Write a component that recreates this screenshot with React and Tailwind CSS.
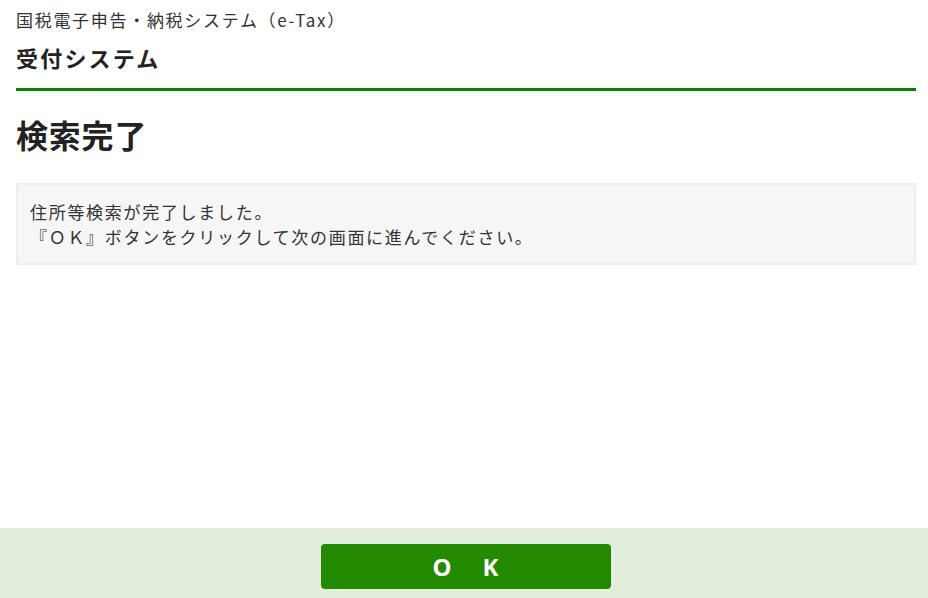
import React from 'react';

const App = () => {
    return (
        <div
            className="flex min-h-screen flex-col bg-white text-[#222]"
            style={{ fontFamily: '"Noto Sans CJK JP", "Noto Sans", sans-serif' }}
        >
            <div className="pl-4 pr-3">
                <header className="border-b-[3px] border-[#0a8200] pb-[16px]">
                    <p className="pt-[8px] text-[17px] leading-[24px] tracking-[1.7px] text-[#333]">国税電子申告・納税システム（e-Tax）</p>
                    <h1 className="mt-[10px] text-[22px] font-bold leading-[30px] tracking-[2.2px]">受付システム</h1>
                </header>

                <h2 className="mt-[20px] text-[32px] font-bold leading-[46px] tracking-[0.8px]">検索完了</h2>

                <div className="mt-[26px] border-2 border-[#eeeeee] bg-[#f6f6f6] px-3 pb-[14px] pt-[14px] text-[17px] leading-[25px] tracking-[1.7px] text-[#333]">
                    <p>住所等検索が完了しました。</p>
                    <p>『ＯＫ』ボタンをクリックして次の画面に進んでください。</p>
                </div>
            </div>

            <footer className="mt-auto flex h-[70px] justify-center bg-[#e0eedb] pl-[3px] pt-4">
                <button
                    className="flex h-[45px] w-[290px] items-center justify-center gap-[31px] rounded-[4px] bg-[#238a00] text-[24px] font-bold text-white"
                    style={{ fontFamily: '"Noto Sans", sans-serif' }}
                >
                    <span>O</span>
                    <span>K</span>
                </button>
            </footer>
        </div>
    );
};

export default App;
